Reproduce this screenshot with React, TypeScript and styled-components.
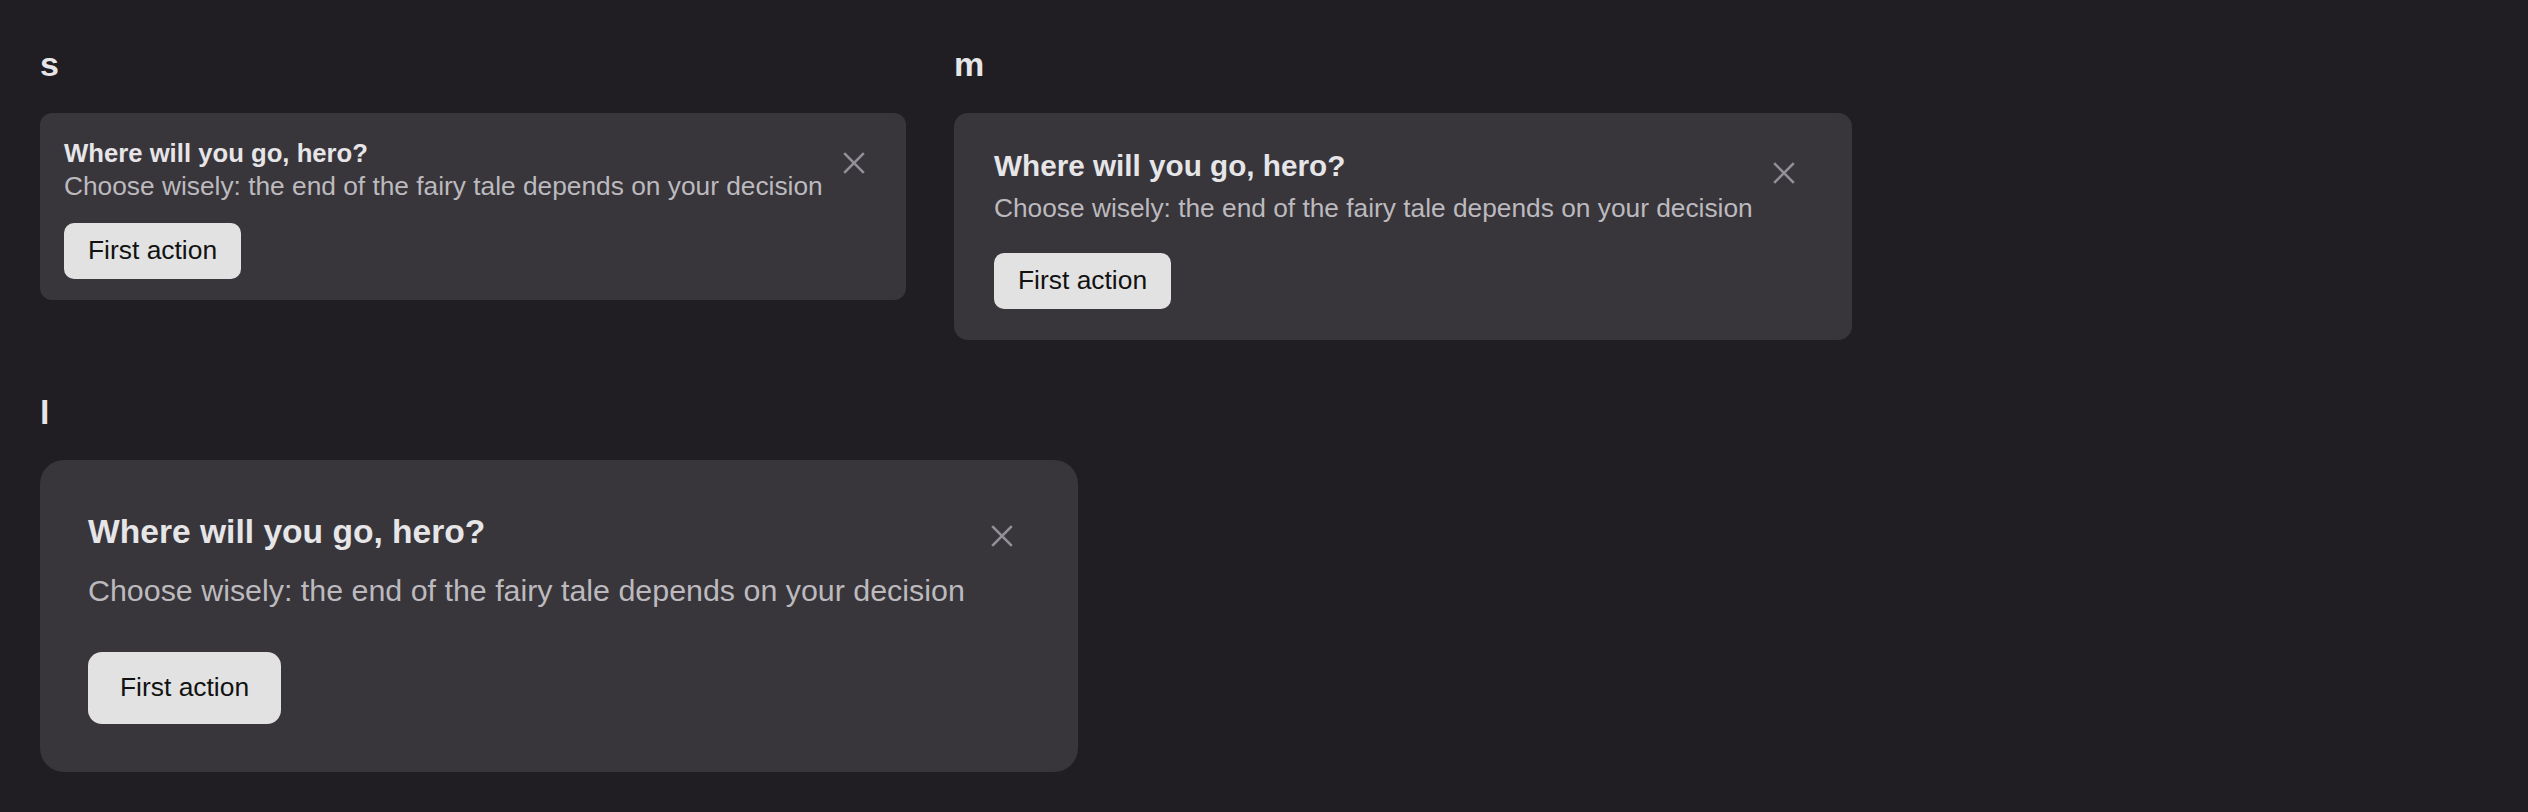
import React from "react";
import styled, { createGlobalStyle } from "styled-components";

type Size = "s" | "m" | "l";

const sizes: Record<
  Size,
  {
    width: number;
    padding: string;
    radius: number;
    titleSize: number;
    titleLh: number;
    descSize: number;
    descLh: number;
    descGap: number;
    buttonGap: number;
    btnPad: string;
    btnRadius: number;
    closeTop: number;
  }
> = {
  s: {
    width: 866,
    padding: "24px 32px 21px 24px",
    radius: 12,
    titleSize: 25.7,
    titleLh: 33.6,
    descSize: 26.3,
    descLh: 33.8,
    descGap: 0,
    buttonGap: 19,
    btnPad: "12px 24px",
    btnRadius: 10,
    closeTop: 6,
  },
  m: {
    width: 898,
    padding: "34px 48px 31px 40px",
    radius: 14,
    titleSize: 29.7,
    titleLh: 38.6,
    descSize: 26.3,
    descLh: 33.8,
    descGap: 7,
    buttonGap: 27,
    btnPad: "12px 24px",
    btnRadius: 10,
    closeTop: 6,
  },
  l: {
    width: 1038,
    padding: "50px 56px 48px 48px",
    radius: 24,
    titleSize: 33.6,
    titleLh: 43.7,
    descSize: 30.4,
    descLh: 39.5,
    descGap: 17,
    buttonGap: 42,
    btnPad: "20px 32px",
    btnRadius: 14,
    closeTop: 6,
  },
};

const GlobalStyle = createGlobalStyle`
  html, body {
    margin: 0;
    padding: 0;
    background: #211e23;
    min-height: 100vh;
  }
  body {
    font-family: "Liberation Sans", Arial, Helvetica, sans-serif;
    -webkit-font-smoothing: antialiased;
  }
  * { box-sizing: border-box; }
`;

const Page = styled.main`
  display: flex;
  flex-direction: column;
  gap: 53px;
  padding: 45px 40px;
`;

const Row = styled.div`
  display: flex;
  align-items: flex-start;
  gap: 48px;
`;

const Section = styled.section`
  display: flex;
  flex-direction: column;
  align-items: flex-start;
  gap: 28px;
`;

const Label = styled.h2`
  margin: 0;
  font-size: 34px;
  line-height: 39.6px;
  font-weight: 700;
  color: #e6e5e7;
`;

const Card = styled.div<{ $size: Size }>`
  display: flex;
  align-items: flex-start;
  width: ${(p) => sizes[p.$size].width}px;
  padding: ${(p) => sizes[p.$size].padding};
  border-radius: ${(p) => sizes[p.$size].radius}px;
  background: #38353b;
`;

const Content = styled.div`
  flex: 1;
  min-width: 0;
  display: flex;
  flex-direction: column;
  align-items: flex-start;
`;

const Title = styled.h3<{ $size: Size }>`
  margin: 0;
  font-weight: 700;
  font-size: ${(p) => sizes[p.$size].titleSize}px;
  line-height: ${(p) => sizes[p.$size].titleLh}px;
  color: #e6e5e7;
  white-space: nowrap;
`;

const Description = styled.p<{ $size: Size }>`
  margin: ${(p) => sizes[p.$size].descGap}px 0 0;
  font-size: ${(p) => sizes[p.$size].descSize}px;
  line-height: ${(p) => sizes[p.$size].descLh}px;
  color: #bcbabe;
  white-space: nowrap;
`;

const ActionButton = styled.button<{ $size: Size }>`
  margin-top: ${(p) => sizes[p.$size].buttonGap}px;
  padding: ${(p) => sizes[p.$size].btnPad};
  border: none;
  border-radius: ${(p) => sizes[p.$size].btnRadius}px;
  background: #e2e2e2;
  color: #121212;
  font-family: inherit;
  font-size: 26.4px;
  line-height: 31.7px;
  cursor: pointer;
`;

const CloseButton = styled.button<{ $size: Size }>`
  flex-shrink: 0;
  width: 40px;
  height: 40px;
  margin-top: ${(p) => sizes[p.$size].closeTop}px;
  padding: 0;
  border: none;
  background: transparent;
  display: flex;
  align-items: center;
  justify-content: center;
  cursor: pointer;
`;

const CloseIcon = () => (
  <svg width="22" height="22" viewBox="0 0 22 22" fill="none">
    <path d="M1.2 1.2 L20.8 20.8 M20.8 1.2 L1.2 20.8" stroke="#939197" strokeWidth="2.6" />
  </svg>
);

const Notice: React.FC<{ size: Size }> = ({ size }) => (
  <Card $size={size}>
    <Content>
      <Title $size={size}>Where will you go, hero?</Title>
      <Description $size={size}>
        Choose wisely: the end of the fairy tale depends on your decision
      </Description>
      <ActionButton $size={size}>First action</ActionButton>
    </Content>
    <CloseButton $size={size} aria-label="Close">
      <CloseIcon />
    </CloseButton>
  </Card>
);

export default function App() {
  return (
    <>
      <GlobalStyle />
      <Page>
        <Row>
          <Section>
            <Label>s</Label>
            <Notice size="s" />
          </Section>
          <Section>
            <Label>m</Label>
            <Notice size="m" />
          </Section>
        </Row>
        <Row>
          <Section>
            <Label>l</Label>
            <Notice size="l" />
          </Section>
        </Row>
      </Page>
    </>
  );
}
